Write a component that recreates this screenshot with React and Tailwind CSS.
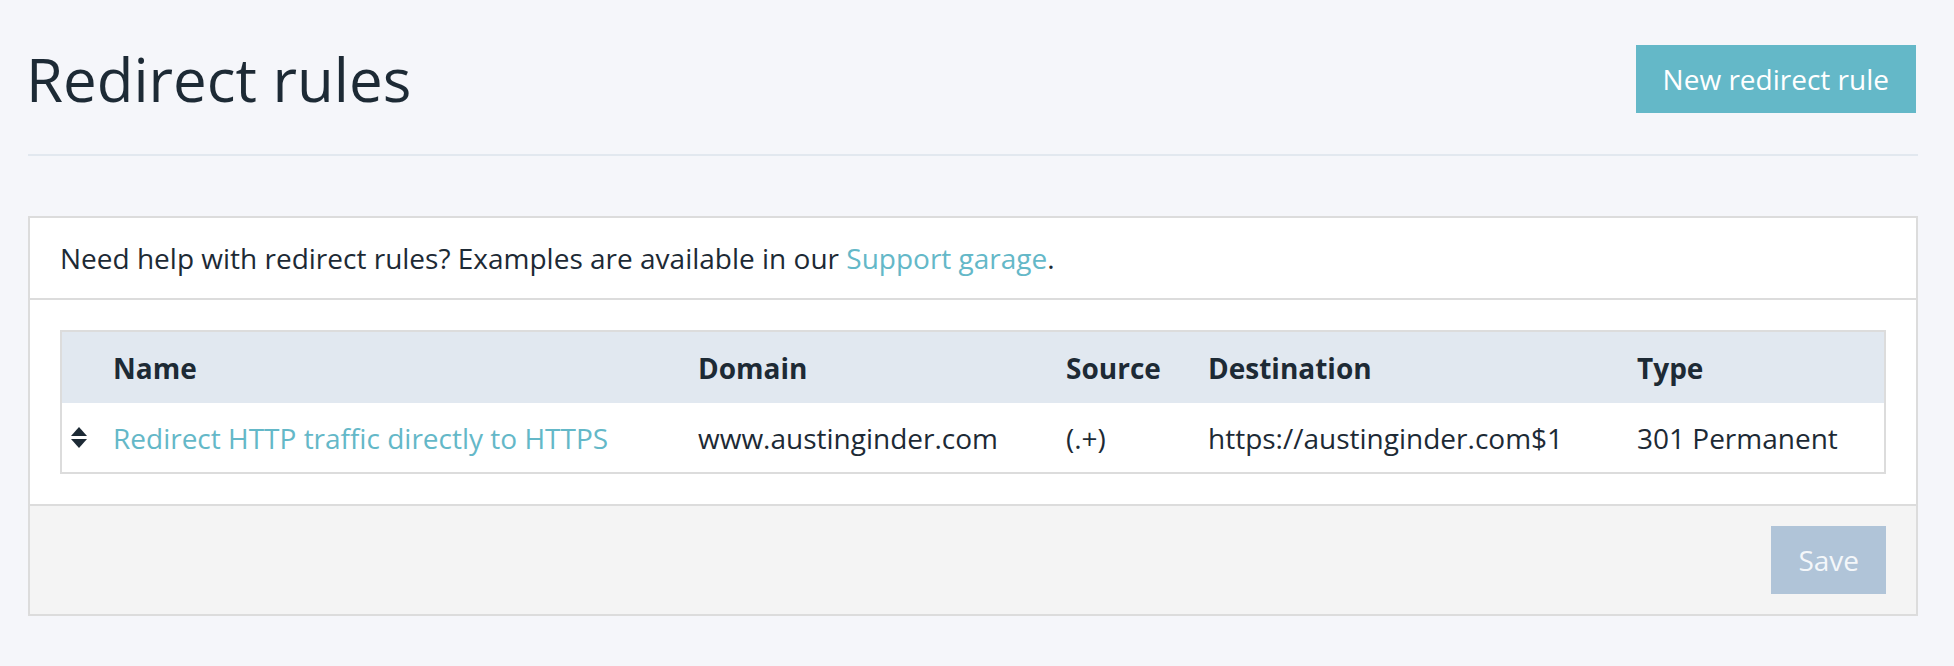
import React from 'react';

const rules = [
  {
    id: 1,
    name: 'Redirect HTTP traffic directly to HTTPS',
    domain: 'www.austinginder.com',
    source: '(.+)',
    destination: 'https://austinginder.com$1',
    type: '301 Permanent',
  },
];

const cols = 'grid grid-cols-[51px_585px_368px_142px_429px_1fr] items-center';

const SortIcon = () => (
  <svg width="16" height="21" viewBox="0 0 16 21" className="block">
    <polygon points="8,0 16,9 0,9" fill="#1d2a35" />
    <polygon points="0,12 16,12 8,21" fill="#1d2a35" />
  </svg>
);

export default function App() {
  return (
    <div className="min-h-[666px] bg-[#f5f6fa] font-['Open_Sans',sans-serif] text-[#1d2a35] pl-[28px] pr-[36px] pt-[38px]">
      {/* page header */}
      <div className="flex items-center justify-between pb-[34px] border-b-2 border-[#e2e8ef]">
        <h1 className="text-[60px] leading-[82px] font-normal -ml-[2px]">Redirect rules</h1>
        <button className="h-[68px] px-[27px] bg-[#64b8c8] text-white text-[28px] mr-[2px]">
          New redirect rule
        </button>
      </div>

      {/* card */}
      <div className="mt-[60px] bg-white border-2 border-[#dcdcdc]">
        <div className="h-[82px] flex items-center px-[30px] border-b-2 border-[#dcdcdc] text-[28px]">
          <p>
            Need help with redirect rules? Examples are available in our{' '}
            <a href="#" className="text-[#64b8c8]">Support garage</a>.
          </p>
        </div>

        <div className="p-[30px] border-b-2 border-[#dcdcdc]">
          <div className="border-2 border-[#dcdcdc] text-[28px]">
            <div className={`${cols} h-[71px] bg-[#e1e8f0] font-bold`}>
              <div></div>
              <div>Name</div>
              <div>Domain</div>
              <div>Source</div>
              <div>Destination</div>
              <div>Type</div>
            </div>
            {rules.map((r) => (
              <div key={r.id} className={`${cols} h-[69px] bg-white`}>
                <div className="pl-[9px]"><SortIcon /></div>
                <a href="#" className="text-[#64b8c8]">{r.name}</a>
                <div>{r.domain}</div>
                <div>{r.source}</div>
                <div>{r.destination}</div>
                <div>{r.type}</div>
              </div>
            ))}
          </div>
        </div>

        <div className="h-[108px] bg-[#f4f4f4] flex items-center justify-end px-[30px]">
          <button className="h-[68px] px-[27px] bg-[#b0c4d8] text-[#f4f7fa] text-[28px]">Save</button>
        </div>
      </div>
    </div>
  );
}
